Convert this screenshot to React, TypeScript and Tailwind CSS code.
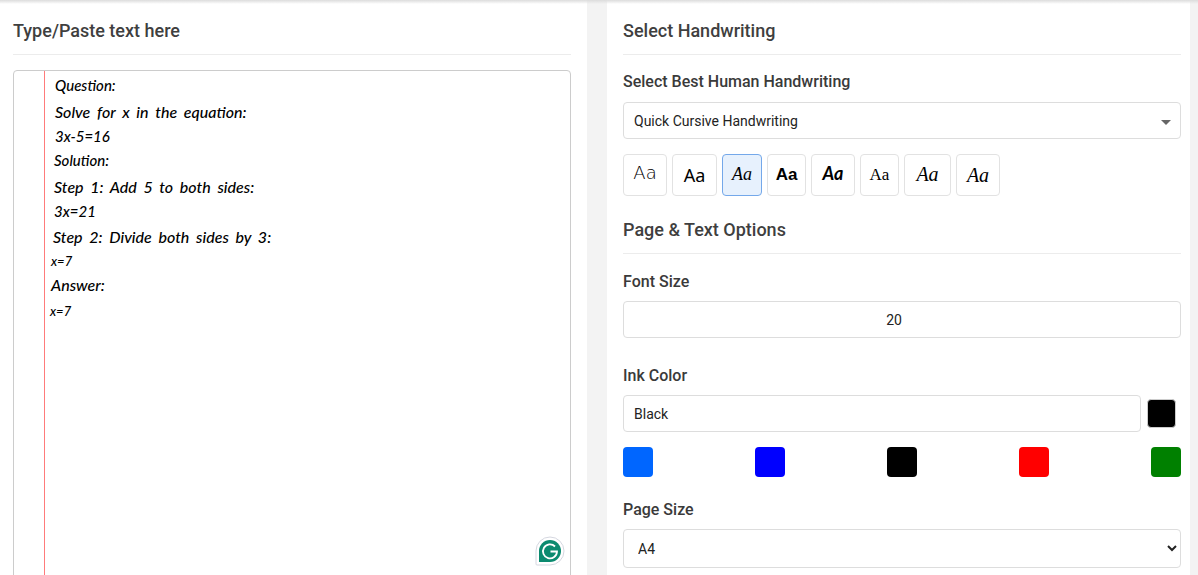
const LINES = [
  { text: 'Question:', cls: 'mt-[2px] pl-[41px] text-[15px]' },
  { text: 'Solve for x in the equation:', cls: 'mt-[3px] pl-[41px] text-[16px] [word-spacing:3px]' },
  { text: '3x-5=16', cls: 'pl-[41px] text-[15px]' },
  { text: 'Solution:', cls: 'pl-[40px] text-[15px]' },
  { text: 'Step 1: Add 5 to both sides:', cls: 'mt-[3px] pl-[40px] text-[16px] [word-spacing:3px]' },
  { text: '3x=21', cls: 'pl-[40px] text-[15px]' },
  { text: 'Step 2: Divide both sides by 3:', cls: 'mt-[2px] pl-[39px] text-[16px] [word-spacing:3px]' },
  { text: 'x=7', cls: 'pl-[37px] text-[13px]' },
  { text: 'Answer:', cls: 'pl-[37px] text-[16px]' },
  { text: 'x=7', cls: 'mt-[2px] pl-[36px] text-[13px]' },
];

const SAMPLES = [
  { cls: 'w-[44px] border-[#e2e2e2] font-["DejaVu_Sans"] font-extralight text-[18px] pb-[5px]' },
  { cls: 'w-[45px] border-[#e2e2e2] font-["Noto_Sans"] text-[18px]' },
  { cls: 'w-[40px] border-[#74a8ea] bg-[#e7f1fd] font-["Liberation_Serif"] italic text-[18px] pb-[2px]' },
  { cls: 'w-[39px] border-[#e2e2e2] font-["Liberation_Sans"] font-bold text-[17px]' },
  { cls: 'w-[44px] border-[#e2e2e2] font-["Lato"] font-bold italic text-[18px] pb-[3px]' },
  { cls: 'w-[39px] border-[#e2e2e2] font-["Liberation_Serif"] text-[17px]' },
  { cls: 'w-[47px] border-[#e2e2e2] font-["Liberation_Serif"] italic text-[20px] pb-[3px]' },
  { cls: 'w-[44px] border-[#e2e2e2] font-["Liberation_Serif"] italic text-[20px]' },
];

const COLORS = ['bg-[#0066ff]', 'bg-[#0000ff]', 'bg-[#000000]', 'bg-[#ff0000]', 'bg-[#008000]'];

function GrammarlyBadge() {
  return (
    <svg className="absolute right-[5px] bottom-[23px]" width="30" height="30" viewBox="0 0 30 30">
      <path d="M1 28 V15 A14 14 0 1 1 15 29 H2 Q1 29 1 28 Z" fill="#fff" stroke="#d5d7e0" strokeWidth="1" />
      <path d="M4 26 V15 A11 11 0 1 1 15 26 Z" fill="#0b8a6f" />
      <path d="M20 10.5 A7 7 0 1 0 22 15.5 H15.5" fill="none" stroke="#fff" strokeWidth="1.8" />
    </svg>
  );
}

function Label({ children }: { children: string }) {
  return <div className="text-[16px] leading-[20px] font-medium text-[#3a3a3a]">{children}</div>;
}

function Heading({ children }: { children: string }) {
  return (
    <div className="h-[36px] border-b border-[#ececec] text-[18px] leading-[24px] font-medium text-[#3f3f3f]">
      {children}
    </div>
  );
}

export default function App() {
  return (
    <div className='relative h-[575px] w-[1198px] overflow-hidden bg-[#f3f3f3] font-["Roboto",sans-serif]'>
      <div className="absolute inset-x-0 top-0 h-[4px] bg-gradient-to-b from-[#dcdcdc] to-transparent" />
      <div className="flex gap-[20px]">
        <div className="h-[575px] w-[587px] shrink-0 bg-white pl-[13px] pr-[16px] pt-[19px]">
          <Heading>Type/Paste text here</Heading>
          <div className="relative mt-[15px] h-[520px] rounded-t-[4px] border border-[#cccccc] font-['Lato',sans-serif] font-medium italic text-black">
            <div className="absolute bottom-0 left-[30px] top-0 w-px bg-[#ff7b7b]" />
            {LINES.map((line, i) => (
              <div key={i} className={`${line.cls} h-[24px] leading-[24px] whitespace-pre`}>{line.text}</div>
            ))}
            <GrammarlyBadge />
          </div>
        </div>
        <div className="h-[575px] w-[583px] shrink-0 bg-white pl-[16px] pr-[9px] pt-[19px]">
          <Heading>Select Handwriting</Heading>
          <div className="mt-[17px]"><Label>Select Best Human Handwriting</Label></div>
          <div className="relative mt-[10px] flex h-[37px] items-center rounded-[4px] border border-[#dddddd] pl-[10px] pt-[2px] text-[14px] text-[#222]">
            Quick Cursive Handwriting
            <div className="absolute right-[9px] top-[17px] h-0 w-0 border-x-[5px] border-t-[5px] border-x-transparent border-t-[#666]" />
          </div>
          <div className="mt-[15px] flex gap-[5px]">
            {SAMPLES.map((s, i) => (
              <div key={i} className={`flex h-[42px] items-center justify-center rounded-[4px] border text-black ${s.cls}`}>Aa</div>
            ))}
          </div>
          <div className="mt-[22px]"><Heading>Page &amp; Text Options</Heading></div>
          <div className="mt-[18px]"><Label>Font Size</Label></div>
          <div className="mt-[9px] flex h-[37px] items-center justify-center rounded-[4px] border border-[#dddddd] pr-[16px] pt-[2px] text-[14px] text-[#222]">20</div>
          <div className="mt-[28px]"><Label>Ink Color</Label></div>
          <div className="mt-[9px] flex items-center">
            <div className="flex h-[37px] w-[518px] items-center rounded-[4px] border border-[#dddddd] pl-[10px] pt-[2px] text-[14px] text-[#222]">Black</div>
            <div className="ml-[6px] h-[29px] w-[29px] rounded-[4px] border border-[#cccccc] bg-black" />
          </div>
          <div className="mt-[15px] flex justify-between">
            {COLORS.map((c) => (
              <div key={c} className={`h-[30px] w-[30px] rounded-[4px] ${c}`} />
            ))}
          </div>
          <div className="mt-[23px]"><Label>Page Size</Label></div>
          <select className="mt-[9px] h-[39px] w-full rounded-[4px] border border-[#dddddd] bg-white pl-[10px] text-[14px] text-[#222]">
            <option>A4</option>
          </select>
        </div>
      </div>
    </div>
  );
}
